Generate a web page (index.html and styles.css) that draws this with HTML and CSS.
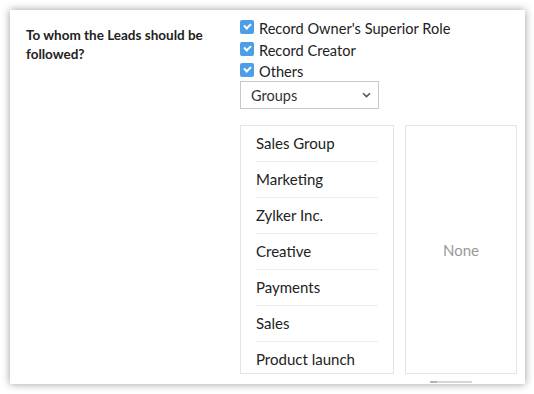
FILE: index.html
```html
<!DOCTYPE html>
<html lang="en">
<head>
    <meta charset="UTF-8">
    <meta name="viewport" content="width=device-width, initial-scale=1.0">
    <title>Follow-up Settings</title>
    <link rel="stylesheet" href="styles.css">
</head>

<body>
    <div class="card">
        <div class="question">To whom the Leads should be followed?</div>

        <div class="answer">
            <label class="option"><span class="check"></span>Record Owner's Superior Role</label>
            <label class="option"><span class="check"></span>Record Creator</label>
            <label class="option"><span class="check"></span>Others</label>

            <div class="select">
                <span>Groups</span>
                <svg class="chevron" width="9" height="6" viewBox="0 0 9 6">
                    <path d="M1 1.2 L4.5 4.6 L8 1.2" fill="none" stroke="#555" stroke-width="1.5"/>
                </svg>
            </div>

            <div class="lists">
                <ul class="list">
                    <li>Sales Group</li>
                    <li>Marketing</li>
                    <li>Zylker Inc.</li>
                    <li>Creative</li>
                    <li>Payments</li>
                    <li>Sales</li>
                    <li>Product launch</li>
                </ul>
                <div class="side">
                    <div class="empty">None</div>
                    <div class="scroll-hint"><span></span></div>
                </div>
            </div>
        </div>
    </div>
</body>
</html>
```

FILE: styles.css
```css
body {
    margin: 0;
    padding: 10px;
    background: #ffffff;
    font-family: 'Lato', 'Liberation Sans', sans-serif;
    color: #222;
}

.card {
    width: 515px;
    height: 374px;
    box-sizing: border-box;
    padding: 10px 0 0 16px;
    background: #fff;
    box-shadow: 0 0 8px rgba(0, 0, 0, 0.4);
    display: grid;
    grid-template-columns: 214px 1fr;
    overflow: hidden;
}

.question {
    font-size: 13.5px;
    font-weight: bold;
    line-height: 19px;
    margin-top: 6px;
    color: #222;
}

.answer {
    display: flex;
    flex-direction: column;
}

.option {
    display: flex;
    align-items: flex-start;
    height: 17px;
    line-height: 17px;
    font-size: 14.6px;
    margin-bottom: 4.5px;
    white-space: nowrap;
}

.check {
    width: 14px;
    height: 14px;
    border-radius: 2px;
    background: #4c9fe6;
    margin-right: 5px;
    position: relative;
}

.check::after {
    content: "";
    position: absolute;
    left: 4px;
    top: 3px;
    width: 5px;
    height: 3px;
    border-left: 2px solid #fff;
    border-bottom: 2px solid #fff;
    transform: rotate(-45deg);
}

.select {
    width: 139px;
    height: 28px;
    box-sizing: border-box;
    border: 1px solid #c8c8c8;
    margin-top: -3.5px;
    padding: 0 7px 0 10px;
    display: flex;
    align-items: center;
    justify-content: space-between;
    font-size: 14.5px;
    color: #333;
}

.lists {
    display: flex;
    gap: 11px;
    margin-top: 16px;
}

.list {
    list-style: none;
    margin: 0;
    padding: 0 15px;
    width: 154px;
    height: 249px;
    box-sizing: border-box;
    border: 1px solid #e4e4e4;
    overflow: hidden;
}

.list li {
    height: 36px;
    box-sizing: border-box;
    line-height: 34px;
    font-size: 15px;
    border-bottom: 1px solid #ececec;
    white-space: nowrap;
}

.side {
    display: flex;
    flex-direction: column;
}

.empty {
    width: 112px;
    height: 249px;
    box-sizing: border-box;
    border: 1px solid #e4e4e4;
    display: flex;
    align-items: center;
    justify-content: center;
    font-size: 15px;
    color: #999;
}

.scroll-hint {
    margin: 7px 0 0 25px;
    width: 42px;
    height: 2px;
    background: #d6d6d6;
}

.scroll-hint span {
    display: block;
    width: 7px;
    height: 2px;
    background: #b4b4b4;
}
```
